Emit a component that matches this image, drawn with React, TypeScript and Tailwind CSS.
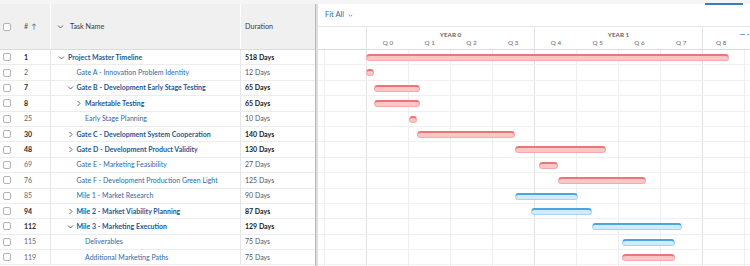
import React from "react";

type Row = {
  id: number;
  name: string;
  level: number;
  bold: boolean;
  toggle?: "open" | "closed";
  dur: string;
  bar: [number, number];
  color: "red" | "blue";
};

const rows: Row[] = [
  { id: 1, name: "Project Master Timeline", level: 0, bold: true, toggle: "open", dur: "518 Days", bar: [366, 729], color: "red" },
  { id: 2, name: "Gate A - Innovation Problem Identity", level: 1, bold: false, dur: "12 Days", bar: [366, 374], color: "red" },
  { id: 7, name: "Gate B - Development Early Stage Testing", level: 1, bold: true, toggle: "open", dur: "65 Days", bar: [374, 420], color: "red" },
  { id: 8, name: "Marketable Testing", level: 2, bold: true, toggle: "closed", dur: "65 Days", bar: [374, 420], color: "red" },
  { id: 25, name: "Early Stage Planning", level: 2, bold: false, dur: "10 Days", bar: [409, 417], color: "red" },
  { id: 30, name: "Gate C - Development System Cooperation", level: 1, bold: true, toggle: "closed", dur: "140 Days", bar: [417, 515], color: "red" },
  { id: 48, name: "Gate D - Development Product Validity", level: 1, bold: true, toggle: "closed", dur: "130 Days", bar: [515, 606], color: "red" },
  { id: 69, name: "Gate E - Marketing Feasibility", level: 1, bold: false, dur: "27 Days", bar: [539, 558], color: "red" },
  { id: 76, name: "Gate F - Development Production Green Light", level: 1, bold: false, dur: "125 Days", bar: [558, 646], color: "red" },
  { id: 85, name: "Mile 1 - Market Research", level: 1, bold: false, dur: "90 Days", bar: [515, 578], color: "blue" },
  { id: 94, name: "Mile 2 - Market Viability Planning", level: 1, bold: true, toggle: "closed", dur: "87 Days", bar: [531, 592], color: "blue" },
  { id: 112, name: "Mile 3 - Marketing Execution", level: 1, bold: true, toggle: "open", dur: "129 Days", bar: [592, 682], color: "blue" },
  { id: 115, name: "Deliverables", level: 2, bold: false, dur: "75 Days", bar: [622, 675], color: "blue" },
  { id: 119, name: "Additional Marketing Paths", level: 2, bold: false, dur: "75 Days", bar: [622, 675], color: "red" },
];

const GANTT_X = 318;
const gridLines = [324, 366, 408, 450, 492, 534, 576, 618, 660, 702, 744];

function Chevron({ open }: { open: boolean }) {
  return (
    <svg width="7" height="7" viewBox="0 0 7 7" className="shrink-0">
      {open ? (
        <path d="M1 2.5 L3.5 5 L6 2.5" fill="none" stroke="#555" strokeWidth="0.9" />
      ) : (
        <path d="M2.5 1 L5 3.5 L2.5 6" fill="none" stroke="#555" strokeWidth="0.9" />
      )}
    </svg>
  );
}

function Checkbox() {
  return <span className="block w-[8px] h-[8px] rounded-[2px] border border-[#b3b3b3] bg-white" />;
}

export default function App() {
  return (
    <div className="relative w-[750px] h-[266px] overflow-hidden bg-white font-['Lato',sans-serif] text-[7px] leading-none">
      {/* top strip */}
      <div className="relative h-[4px] bg-[#f5f5f5]">
        <div className="absolute left-[705px] top-[3px] w-[38px] h-[1.5px] bg-[#3a7cc0]" />
      </div>

      <div className="flex h-[262px]">
        {/* LEFT GRID */}
        <div className="w-[315px] shrink-0 flex flex-col">
          {/* Header */}
          <div className="h-[46px] flex items-center bg-[#f0f0f0] border-b border-[#dcdcdc] text-[#3a3a3a] text-[7.2px]">
            <div className="w-[18px] h-full flex items-center pl-[3px]">
              <Checkbox />
            </div>
            <div className="w-[32px] h-full flex items-center pl-[6px] gap-[3px] text-[#555]">
              <span>#</span>
              <span>↑</span>
            </div>
            <div className="w-[190px] h-full flex items-center gap-[6px] pl-[6px] border-l border-white">
              <Chevron open />
              <span>Task Name</span>
            </div>
            <div className="flex-1 h-full flex items-center pl-[4px] border-l border-white">Duration</div>
          </div>

          {/* Rows */}
          {rows.map((r) => (
            <div key={r.id} className="h-[15.4px] flex items-center border-b border-[#ececec]">
              <div className="w-[18px] h-full flex items-center pl-[3px]">
                <Checkbox />
              </div>
              <div
                className={`w-[32px] h-full flex items-center pl-[6px] ${
                  r.bold ? "font-bold text-[#2b2b2b]" : "text-[#666]"
                }`}
              >
                {r.id}
              </div>
              <div className="w-[190px] h-full flex items-center border-l border-[#e6e6e6]">
                <div
                  className="flex items-center"
                  style={{ paddingLeft: 7 + r.level * 8.5 + (r.toggle ? 0 : 10) }}
                >
                  {r.toggle && (
                    <span className="w-[10px] flex items-center">
                      <Chevron open={r.toggle === "open"} />
                    </span>
                  )}
                  <span
                    className={`whitespace-nowrap ${
                      r.bold ? "font-bold text-[#1c5994]" : "text-[#2e6aa6]"
                    }`}
                  >
                    {r.name}
                  </span>
                </div>
              </div>
              <div
                className={`flex-1 h-full flex items-center pl-[4px] border-l border-[#e6e6e6] ${
                  r.bold ? "font-bold text-[#222]" : "text-[#555]"
                }`}
              >
                {r.dur}
              </div>
            </div>
          ))}
        </div>

        {/* Splitter */}
        <div className="w-[3px] shrink-0 bg-[#dedede] border-l border-[#b9b9b9]" />

        {/* GANTT */}
        <div className="flex-1 flex flex-col min-w-0">
          {/* Toolbar */}
          <div className="h-[23px] flex items-center gap-[4px] pl-[7px] border-b border-[#e6e6e6] text-[#2e6aa6] text-[7.5px]">
            <span>Fit All</span>
            <svg width="5" height="5" viewBox="0 0 6 6">
              <path d="M1 2 L3 4 L5 2" fill="none" stroke="#2e6aa6" strokeWidth="0.8" />
            </svg>
          </div>

          {/* Timeline header */}
          <div className="h-[23px] flex border-b border-[#dcdcdc] text-[#666] text-[6.3px]">
            <div className="w-[48px] shrink-0" />
            {["YEAR 0", "YEAR 1"].map((y, yi) => (
              <div key={y} className="w-[168px] shrink-0 flex flex-col border-l border-[#e2e2e2]">
                <div className="h-[11px] flex items-end justify-center font-bold text-[#666]">{y}</div>
                <div className="flex-1 grid grid-cols-4 items-center text-center">
                  {[0, 1, 2, 3].map((q) => (
                    <span key={q}>Q {yi * 4 + q}</span>
                  ))}
                </div>
              </div>
            ))}
            <div className="flex-1 flex flex-col border-l border-[#e2e2e2]">
              <div className="h-[11px] flex items-end justify-end pr-[1px] text-[#3a7cc0] font-bold text-[7px]">— ·</div>
              <div className="flex-1 flex items-center pl-[13px]">
                <span>Q 8</span>
              </div>
            </div>
          </div>

          {/* Body */}
          <div className="relative flex-1">
            {gridLines.map((x) => (
              <div
                key={x}
                className={`absolute top-0 bottom-0 w-px ${
                  x === 534 || x === 702 || x === 366 ? "bg-[#e2e2e2]" : "bg-[#eeeeee]"
                }`}
                style={{ left: x - GANTT_X }}
              />
            ))}
            {rows.map((r) => (
              <div key={r.id} className="relative h-[15.4px] border-b border-[#f0f0f0]">
                <div
                  className={`absolute top-[4px] h-[7px] rounded-full border border-t-2 ${
                    r.color === "red"
                      ? "bg-[#fcc6c6] border-[#f5a9a9] border-t-[#e97777]"
                      : "bg-[#d3eafa] border-[#a9d3f0] border-t-[#4ba5e0]"
                  }`}
                  style={{ left: r.bar[0] - GANTT_X, width: r.bar[1] - r.bar[0] }}
                />
              </div>
            ))}
          </div>
        </div>
      </div>
    </div>
  );
}
